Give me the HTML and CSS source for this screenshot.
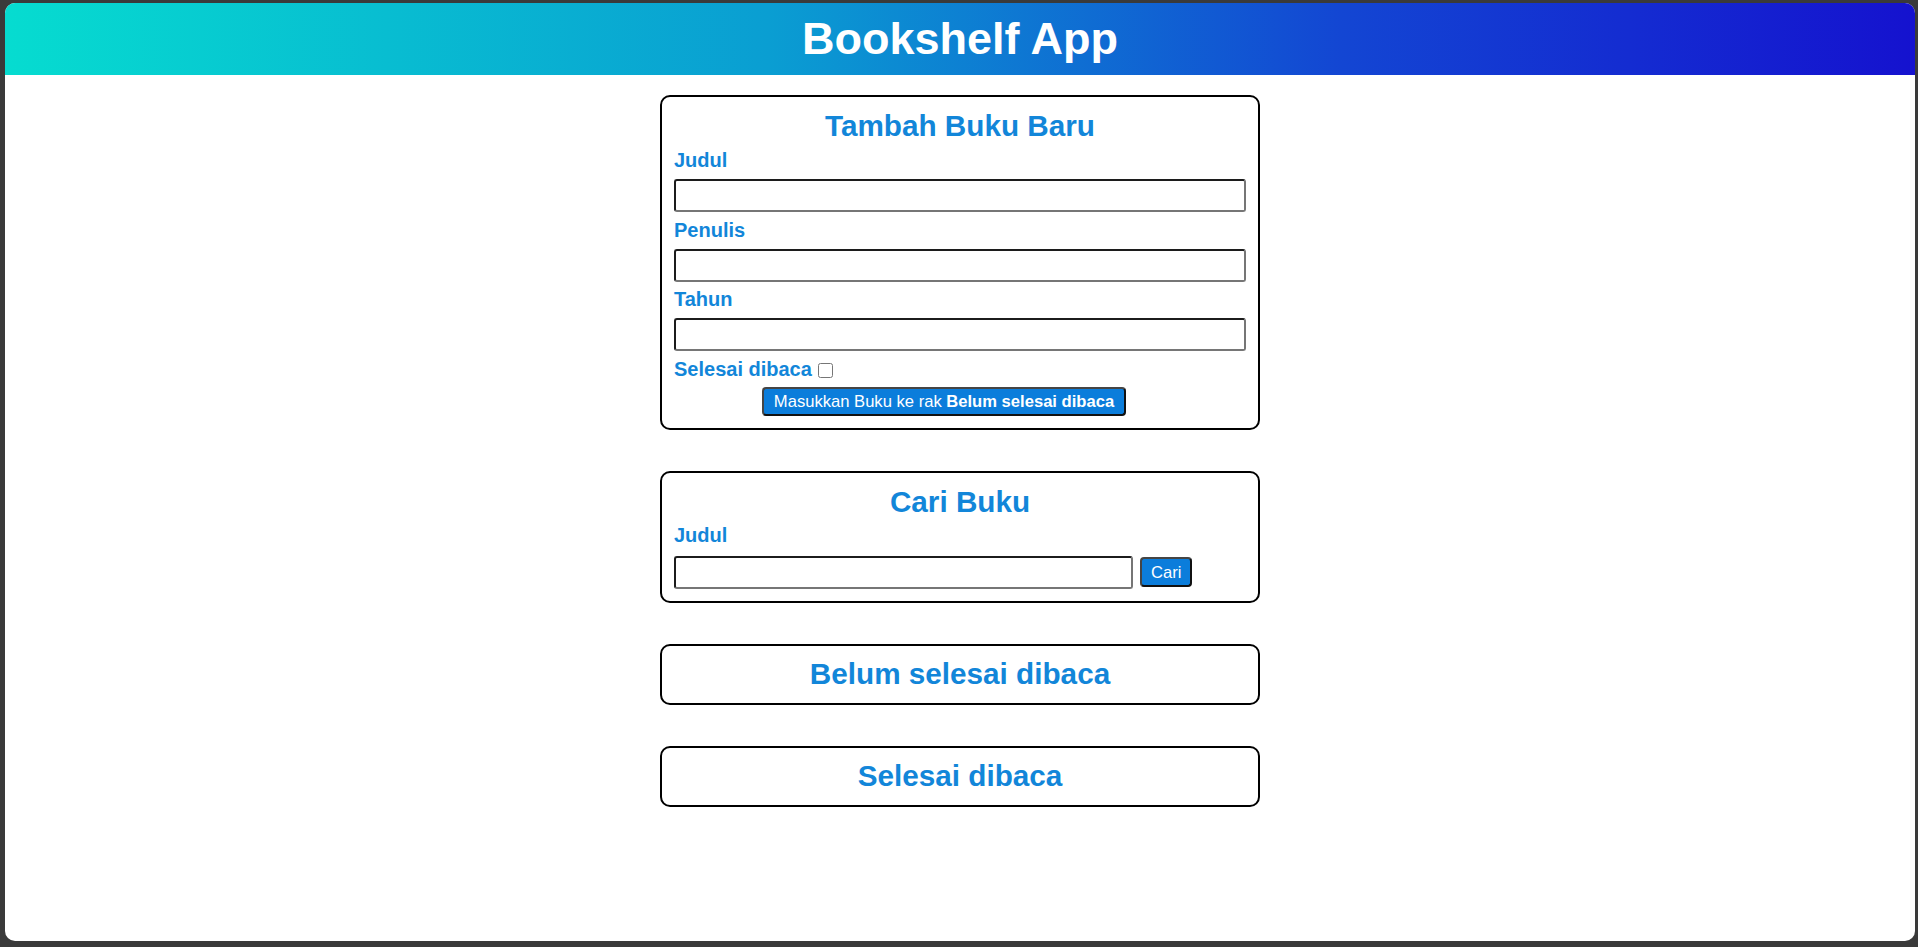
FILE: index.html
```html
<!DOCTYPE html>
<html lang="id">
<head>
<meta charset="utf-8">
<title>Bookshelf App</title>
<link rel="stylesheet" href="styles.css">
</head>
<body>
<div class="window">
  <header class="head-bar">
    <h1 class="app-title">Bookshelf App</h1>
  </header>
  <main class="main">
    <section class="card">
      <h2 class="card-title">Tambah Buku Baru</h2>
      <form class="book-form">
        <div class="field">
          <label class="field-label" for="inputBookTitle">Judul</label>
          <input class="text-input" id="inputBookTitle" type="text">
        </div>
        <div class="field">
          <label class="field-label" for="inputBookAuthor">Penulis</label>
          <input class="text-input" id="inputBookAuthor" type="text">
        </div>
        <div class="field">
          <label class="field-label" for="inputBookYear">Tahun</label>
          <input class="text-input" id="inputBookYear" type="number">
        </div>
        <div class="check-field">
          <label class="field-label" for="inputBookIsComplete">Selesai dibaca</label>
          <input class="check-box" id="inputBookIsComplete" type="checkbox">
        </div>
        <button class="btn btn-submit" type="button">Masukkan Buku ke rak <b>Belum selesai dibaca</b></button>
      </form>
    </section>
    <section class="card">
      <h2 class="card-title">Cari Buku</h2>
      <form class="search-form">
        <label class="field-label" for="searchBookTitle">Judul</label>
        <div class="search-row">
          <input class="text-input search-input" id="searchBookTitle" type="text">
          <button class="btn btn-search" type="button">Cari</button>
        </div>
      </form>
    </section>
    <section class="card card-shelf">
      <h2 class="card-title">Belum selesai dibaca</h2>
    </section>
    <section class="card card-shelf">
      <h2 class="card-title">Selesai dibaca</h2>
    </section>
  </main>
</div>
</body>
</html>
```

FILE: styles.css
```css
* {
  box-sizing: border-box;
}

html, body {
  margin: 0;
  height: 100%;
}

body {
  background: #3a3a3a;
  padding: 3px 3px 6px 5px;
  font-family: "Liberation Sans", Arial, sans-serif;
}

.window {
  height: 100%;
  background: #ffffff;
  border-radius: 10px;
  overflow: hidden;
}

.head-bar {
  height: 72px;
  display: flex;
  align-items: center;
  justify-content: center;
  background: linear-gradient(to right, #06dcd0 0%, #0a9ed2 40%, #1346d3 70%, #1512cf 100%);
}

.app-title {
  margin: 0;
  color: #ffffff;
  font-size: 45px;
  font-weight: bold;
  line-height: 52px;
}

.main {
  display: flex;
  flex-direction: column;
  align-items: center;
  gap: 41px;
  padding-top: 20px;
}

.card {
  width: 600px;
  border: 2px solid #000000;
  border-radius: 10px;
  padding: 12px;
  display: flex;
  flex-direction: column;
}

.card-shelf {
  padding: 11.5px 12px;
}

.card-title {
  margin: 0;
  text-align: center;
  color: #1286d9;
  font-size: 29.7px;
  line-height: 34px;
  font-weight: bold;
}

.book-form {
  display: flex;
  flex-direction: column;
  margin-top: 6px;
}

.field {
  display: flex;
  flex-direction: column;
  gap: 7px;
  margin-bottom: 6.5px;
}

.field-label {
  color: #1286d9;
  font-size: 20px;
  line-height: 23px;
  font-weight: bold;
}

.text-input {
  width: 100%;
  height: 33px;
  margin: 0;
  border-width: 2px;
  border-style: solid;
  border-color: #1c1c1c #767676 #767676 #1c1c1c;
  border-radius: 3px;
  background: #ffffff;
  font-family: inherit;
  font-size: 16px;
}

.check-field {
  display: flex;
  align-items: center;
}

.check-box {
  width: 15px;
  height: 15px;
  margin: 2px 0 0 6px;
}

.btn {
  margin: 0;
  background: #0b7ddb;
  color: #ffffff;
  font-family: inherit;
  font-size: 16.6px;
  line-height: 19px;
  border-width: 2px;
  border-style: solid;
  border-color: #454545 #111111 #111111 #454545;
  border-radius: 4px;
  cursor: pointer;
}

.btn-submit {
  align-self: center;
  margin-top: 6px;
  margin-right: 32px;
  height: 29px;
  padding: 0 10px;
}

.search-form {
  display: flex;
  flex-direction: column;
  margin-top: 5px;
}

.search-row {
  display: flex;
  align-items: center;
  gap: 7px;
  margin-top: 9px;
}

.search-input {
  width: 459px;
  flex: none;
}

.btn-search {
  height: 30px;
  padding: 0 9px;
}
```
